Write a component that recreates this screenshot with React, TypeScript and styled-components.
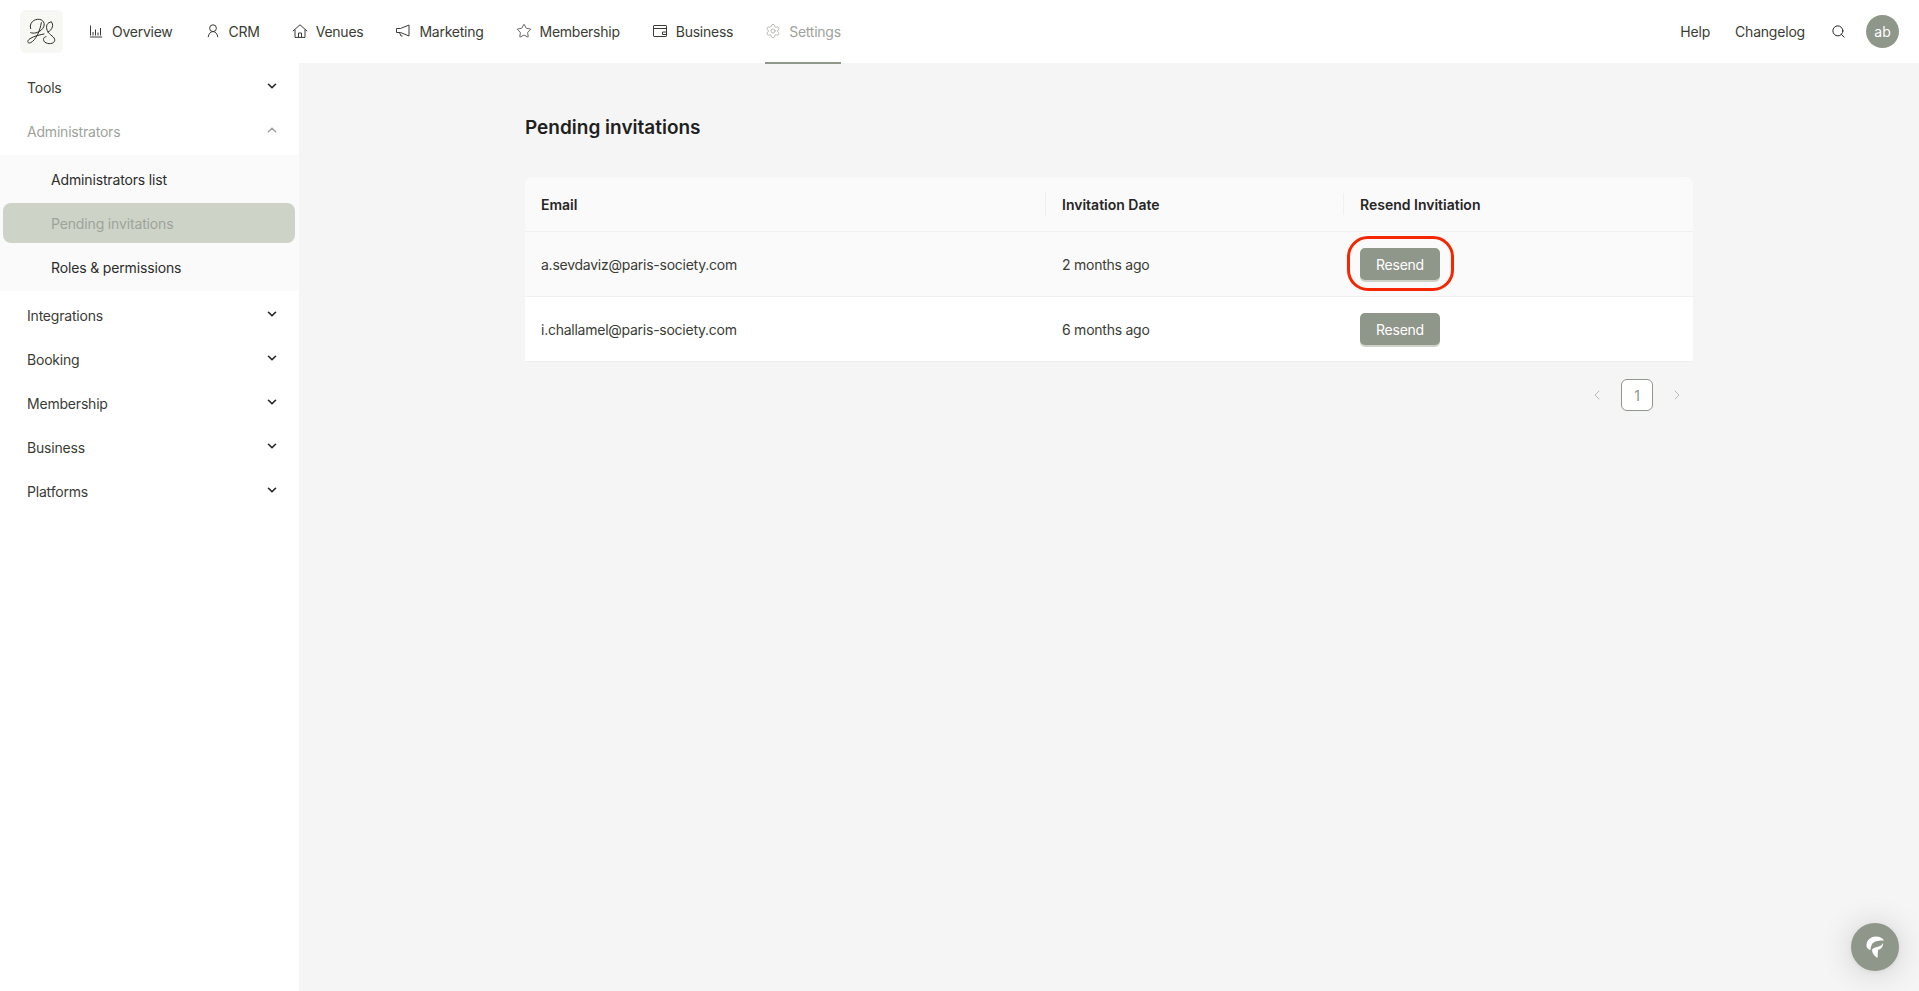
import React from "react";
import styled, { createGlobalStyle } from "styled-components";
import { ChevronDown, ChevronUp, ChevronLeft, ChevronRight, Search, Star, Settings } from "lucide-react";

const Global = createGlobalStyle`
  html, body { margin: 0; padding: 0; height: 100%; background: #f5f5f5; }
  body { font-family: Inter, "Liberation Sans", sans-serif; color: #262626; overflow: hidden; }
  * { box-sizing: border-box; }
`;
const Page = styled.div`display: flex; flex-direction: column; width: 1919px; height: 991px;`;
const TopBar = styled.header`display: flex; align-items: center; height: 63px; background: #fff; padding: 0 20px; flex: none; position: relative; z-index: 1;`;
const LogoBox = styled.div`width: 43px; height: 43px; border-radius: 6px; background: #f7f8f3; display: flex; align-items: center; justify-content: center; margin-right: 25px;`;
const Nav = styled.nav`display: flex; align-self: flex-start; gap: 32px;`;
const NavItem = styled.a<{ $active?: boolean }>`
  display: flex; align-items: center; gap: 8px; height: 64px; font-size: 14px; letter-spacing: -0.25px;
  color: ${p => (p.$active ? "#9da39a" : "#3a3c36")};
  border-bottom: 2px solid ${p => (p.$active ? "#8f968a" : "transparent")};
`;
const NavIcon = styled.svg`width: 16px; height: 16px; flex: none; fill: none; stroke: currentColor; stroke-width: 1; stroke-linejoin: round;`;
const Spacer = styled.div`flex: 1;`;
const RightLink = styled.a<{ $last?: boolean }>`font-size: 14px; letter-spacing: -0.2px; color: #3a3c36; margin-right: ${p => (p.$last ? "26px" : "25px")};`;
const SearchWrap = styled.span`display: flex; margin-right: 20px; color: #262626;`;
const Avatar = styled.div`width: 33px; height: 33px; border-radius: 50%; background: #8f968a; color: #fff; font-size: 14px; display: flex; align-items: center; justify-content: center;`;
const Body = styled.div`display: flex; flex: 1; min-height: 0;`;
const Sidebar = styled.aside`width: 299px; background: #fff; flex: none; padding-top: 2px;`;
const MenuRow = styled.div<{ $open?: boolean }>`
  display: flex; align-items: center; justify-content: space-between; height: 44px; padding: 0 20px 0 27px; font-size: 14px; letter-spacing: -0.2px;
  color: ${p => (p.$open ? "#9da39a" : "#3a3c36")};
  svg { margin-bottom: 2px; }
`;
const SubPanel = styled.div`background: #fafafa; margin: 2px 0; padding: 2px 0; height: 136px; display: flex; flex-direction: column;`;
const SubItem = styled.div<{ $active?: boolean }>`
  height: 40px; margin: 2px 4px 2px 3px; padding-left: 48px; display: flex; align-items: center; font-size: 14px; letter-spacing: -0.15px; border-radius: 8px;
  color: ${p => (p.$active ? "#9da39a" : "#2c2c2a")};
  background: ${p => (p.$active ? "#ced3c8" : "transparent")};
`;
const Main = styled.main`flex: 1; background: #f5f5f5; padding: 51px 226px 0 226px;`;
const Title = styled.h1`margin: 0 0 35px; font-size: 19px; line-height: 28px; font-weight: 600; color: #1f1f1f;`;
const Table = styled.div`background: #fff; border-radius: 8px 8px 0 0; width: 1168px;`;
const Row = styled.div<{ $variant: "head" | "hover" | "plain" }>`
  display: grid; grid-template-columns: 521px 298px 349px; align-items: center;
  height: ${p => (p.$variant === "head" ? "55px" : "65px")};
  background: ${p => (p.$variant === "plain" ? "#fff" : "#fafafa")};
  border-bottom: 1px solid #f0f0f0;
  border-radius: ${p => (p.$variant === "head" ? "8px 8px 0 0" : "0")};
`;
const HeadCell = styled.div<{ $sep?: boolean }>`
  position: relative; padding-left: 16px; font-size: 14px; font-weight: 600; color: #262626;
  ${p => p.$sep && `&::before { content: ""; position: absolute; left: -1px; top: 50%; height: 22px; margin-top: -11px; width: 1px; background: #f0f0f0; }`}
`;
const Cell = styled.div`padding-left: 16px; font-size: 14px; letter-spacing: -0.25px; color: #3a3c36; position: relative;`;
const ResendButton = styled.button`
  width: 80px; height: 32px; border: 0; border-radius: 5px; background: #8f968a; color: #fff; font: 14px Inter, sans-serif; letter-spacing: -0.25px;
  box-shadow: 0 2px 0 #ced3c8; display: block; padding: 0;
`;
const Ring = styled.div`
  position: absolute; left: 3px; top: -12px; width: 107px; height: 55px; border: 3.5px solid #f52600; border-radius: 21px; pointer-events: none;
`;
const Pager = styled.div`display: flex; justify-content: flex-end; align-items: center; gap: 8px; width: 1168px; margin-top: 17px;`;
const PageArrow = styled.span`display: flex; width: 32px; justify-content: center; color: #b5b5b5;`;
const PageBox = styled.div`width: 32px; height: 32px; border: 1px solid #8f968a; border-radius: 6px; background: #fff; color: #8f968a; font-size: 14px; display: flex; align-items: center; justify-content: center;`;
const ChatBubble = styled.div`
  position: fixed; right: 20px; bottom: 20px; width: 48px; height: 48px; border-radius: 50%; background: #8f968a; display: flex; align-items: center; justify-content: center;
  box-shadow: 0 1px 6px rgba(0,0,0,.06), 0 2px 32px rgba(0,0,0,.16);
`;

const IconOverview = () => (
  <NavIcon viewBox="0 0 16 16">
    <path d="M2.5 2.5V12.5M1.8 14H14.2" />
    <path d="M5 12.5V9M7.5 12.5V6.5M10 12.5V9.5M12.5 12.5V5" />
  </NavIcon>
);
const IconCrm = () => (
  <NavIcon viewBox="0 0 16 16">
    <circle cx="8" cy="5.2" r="3.4" />
    <path d="M3.2 14.2C3.5 11 5.4 8.6 8 8.6C10.6 8.6 12.5 11 12.8 14.2" />
  </NavIcon>
);
const IconVenues = () => (
  <NavIcon viewBox="0 0 16 16">
    <path d="M0.8 8.2L8 1.8L15.2 8.2" />
    <path d="M3 6.6V14.4H13V6.6" />
    <path d="M6.5 14.4V10H9.5V14.4" />
  </NavIcon>
);
const IconMarketing = () => (
  <NavIcon viewBox="0 0 16 16">
    <path d="M14 2L5.5 5.5H1.5V9.5H5.5L14 13Z" />
    <path d="M4.5 9.5L6 13H7.5" />
  </NavIcon>
);
const IconBusiness = () => (
  <NavIcon viewBox="0 0 16 16">
    <rect x="1.5" y="2.5" width="13" height="11" rx="0.6" />
    <path d="M1.5 5.5H14.5M14.5 9H10.5V11.5H14.5" />
  </NavIcon>
);

const navItems = [
  { label: "Overview", icon: <IconOverview /> },
  { label: "CRM", icon: <IconCrm /> },
  { label: "Venues", icon: <IconVenues /> },
  { label: "Marketing", icon: <IconMarketing /> },
  { label: "Membership", icon: <Star size={16} strokeWidth={1.2} /> },
  { label: "Business", icon: <IconBusiness /> },
];
const rows = [
  { email: "a.sevdaviz@paris-society.com", date: "2 months ago", variant: "hover" as const, ring: true },
  { email: "i.challamel@paris-society.com", date: "6 months ago", variant: "plain" as const, ring: false },
];
const Logo = () => (
  <svg width="32" height="32" viewBox="48 50 96 96" fill="none" stroke="#2c2c2a" strokeWidth="3" strokeLinecap="round">
    <path d="M62 88C56 72 72 58 88 60C104 62 108 80 94 92C84 100 72 104 62 100" />
    <path d="M94 70C90 95 78 122 62 130C52 134 50 124 60 118C72 110 92 106 102 104" />
    <path d="M124 68C112 68 106 80 112 94C118 108 136 112 134 124C132 134 114 136 104 128C98 122 100 112 108 112" />
    <path d="M124 68C132 74 128 92 114 98" />
  </svg>
);
const ChatMark = () => (
  <svg width="24" height="24" viewBox="0 0 24 24" fill="#fff">
    <path d="M3.5 11C3 6 7 1.5 13 1.5C16.5 1.5 19.5 3 21 5.5C17 5 11 6 9 9C8 11 7.5 13 7.5 15C5 14.5 3.8 13 3.5 11Z" />
    <path d="M9 14.5C11 12.5 13.5 12 15.5 11.5C17.5 11 19.5 9.5 20 8C20.5 11 18.5 14 15 15L14.5 23C11 21 9 18 9 14.5Z" />
  </svg>
);

export default function App() {
  return (
    <Page>
      <Global />
      <TopBar>
        <LogoBox><Logo /></LogoBox>
        <Nav>
          {navItems.map(({ label, icon }) => (
            <NavItem key={label}>{icon}{label}</NavItem>
          ))}
          <NavItem $active><Settings size={16} strokeWidth={1.1} />Settings</NavItem>
        </Nav>
        <Spacer />
        <RightLink>Help</RightLink>
        <RightLink $last>Changelog</RightLink>
        <SearchWrap><Search size={15} strokeWidth={1.6} /></SearchWrap>
        <Avatar>ab</Avatar>
      </TopBar>
      <Body>
        <Sidebar>
          <MenuRow>Tools<ChevronDown size={14} strokeWidth={2.8} color="#262626" /></MenuRow>
          <MenuRow $open>Administrators<ChevronUp size={14} strokeWidth={2.6} color="#9da39a" /></MenuRow>
          <SubPanel>
            <SubItem>Administrators list</SubItem>
            <SubItem $active>Pending invitations</SubItem>
            <SubItem>Roles &amp; permissions</SubItem>
          </SubPanel>
          {["Integrations", "Booking", "Membership", "Business", "Platforms"].map(l => (
            <MenuRow key={l}>{l}<ChevronDown size={14} strokeWidth={2.8} color="#262626" /></MenuRow>
          ))}
        </Sidebar>
        <Main>
          <Title>Pending invitations</Title>
          <Table>
            <Row $variant="head">
              <HeadCell>Email</HeadCell>
              <HeadCell $sep>Invitation Date</HeadCell>
              <HeadCell $sep>Resend Invitiation</HeadCell>
            </Row>
            {rows.map(r => (
              <Row key={r.email} $variant={r.variant}>
                <Cell>{r.email}</Cell>
                <Cell>{r.date}</Cell>
                <Cell>
                  <ResendButton>Resend</ResendButton>
                  {r.ring && <Ring />}
                </Cell>
              </Row>
            ))}
          </Table>
          <Pager>
            <PageArrow><ChevronLeft size={16} strokeWidth={1.4} /></PageArrow>
            <PageBox>1</PageBox>
            <PageArrow><ChevronRight size={16} strokeWidth={1.4} /></PageArrow>
          </Pager>
        </Main>
      </Body>
      <ChatBubble><ChatMark /></ChatBubble>
    </Page>
  );
}
